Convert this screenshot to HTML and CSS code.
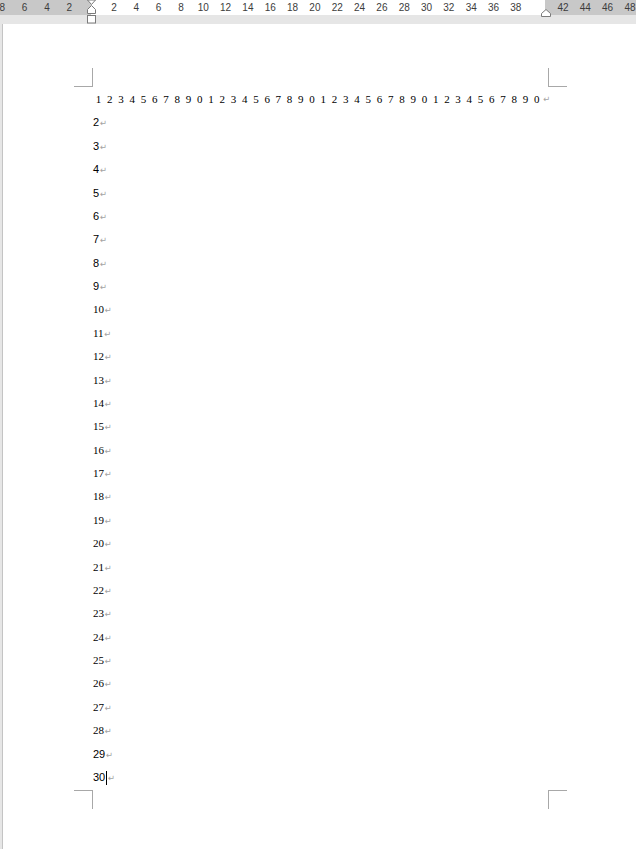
FILE: index.html
```html
<!DOCTYPE html>
<html lang="zh">
<head>
<meta charset="utf-8">
<title>Document</title>
<link rel="stylesheet" href="styles.css">
</head>
<body>
<div class="ruler">
  <div class="r-left"><span>8</span><span>6</span><span>4</span><span>2</span></div>
  <div class="r-main"><span>2</span><span>4</span><span>6</span><span>8</span><span>10</span><span>12</span><span>14</span><span>16</span><span>18</span><span>20</span><span>22</span><span>24</span><span>26</span><span>28</span><span>30</span><span>32</span><span>34</span><span>36</span><span>38</span></div>
  <div class="r-right"><span>42</span><span>44</span><span>46</span><span>48</span></div>
  <svg class="marker-left" width="11" height="24" viewBox="0 0 11 24"><polygon points="1.5,0 9.5,0 5.5,4.5"/><polygon points="5.5,5.5 9.5,9.5 9.5,13.5 1.5,13.5 1.5,9.5"/><rect x="1.5" y="15.5" width="8" height="7.5"/></svg>
  <svg class="marker-right" width="12" height="9" viewBox="0 0 12 9"><polygon points="6,0.5 10.5,4.5 10.5,7.5 1.5,7.5 1.5,4.5"/></svg>
</div>
<div class="band"></div>
<div class="page">
  <div class="textarea">
    <span class="corner tl"></span><span class="corner tr"></span><span class="corner bl"></span><span class="corner br"></span>
    <div class="lines">
      <div class="line grid"><span>1</span><span>2</span><span>3</span><span>4</span><span>5</span><span>6</span><span>7</span><span>8</span><span>9</span><span>0</span><span>1</span><span>2</span><span>3</span><span>4</span><span>5</span><span>6</span><span>7</span><span>8</span><span>9</span><span>0</span><span>1</span><span>2</span><span>3</span><span>4</span><span>5</span><span>6</span><span>7</span><span>8</span><span>9</span><span>0</span><span>1</span><span>2</span><span>3</span><span>4</span><span>5</span><span>6</span><span>7</span><span>8</span><span>9</span><span>0</span><b class="pm">↵</b></div>
      <div class="line sans">2<b class="pm">↵</b></div>
      <div class="line sans">3<b class="pm">↵</b></div>
      <div class="line sans">4<b class="pm">↵</b></div>
      <div class="line sans">5<b class="pm">↵</b></div>
      <div class="line sans">6<b class="pm">↵</b></div>
      <div class="line sans">7<b class="pm">↵</b></div>
      <div class="line sans">8<b class="pm">↵</b></div>
      <div class="line sans">9<b class="pm">↵</b></div>
      <div class="line serif">10<b class="pm">↵</b></div>
      <div class="line serif">11<b class="pm">↵</b></div>
      <div class="line serif">12<b class="pm">↵</b></div>
      <div class="line serif">13<b class="pm">↵</b></div>
      <div class="line serif">14<b class="pm">↵</b></div>
      <div class="line serif">15<b class="pm">↵</b></div>
      <div class="line serif">16<b class="pm">↵</b></div>
      <div class="line serif">17<b class="pm">↵</b></div>
      <div class="line serif">18<b class="pm">↵</b></div>
      <div class="line serif">19<b class="pm">↵</b></div>
      <div class="line serif">20<b class="pm">↵</b></div>
      <div class="line serif">21<b class="pm">↵</b></div>
      <div class="line serif">22<b class="pm">↵</b></div>
      <div class="line serif">23<b class="pm">↵</b></div>
      <div class="line serif">24<b class="pm">↵</b></div>
      <div class="line serif">25<b class="pm">↵</b></div>
      <div class="line serif">26<b class="pm">↵</b></div>
      <div class="line serif">27<b class="pm">↵</b></div>
      <div class="line serif">28<b class="pm">↵</b></div>
      <div class="line sans">29<b class="pm">↵</b></div>
      <div class="line sans">30<i class="caret"></i><b class="pm">↵</b></div>
    </div>
  </div>
</div>
</body>
</html>
```

FILE: styles.css
```css
* { box-sizing: border-box; }
html, body { margin: 0; padding: 0; }
body {
  width: 636px;
  height: 849px;
  overflow: hidden;
  background: #e6e6e6;
  font-family: "Liberation Serif", "Times New Roman", serif;
}
.ruler {
  position: relative;
  height: 15px;
  display: flex;
  font-family: "Liberation Sans", Arial, sans-serif;
  font-size: 10px;
  color: #3c3c3c;
  line-height: 15px;
}
.ruler span {
  flex: 0 0 22.34px;
  width: 22.34px;
  text-align: center;
}
.r-left {
  width: 91px;
  flex: 0 0 91px;
  background: #c8c8c8;
  display: flex;
  justify-content: flex-end;
  padding-right: 10.6px;
  overflow: hidden;
}
.r-main {
  width: 454px;
  flex: 0 0 454px;
  background: #ffffff;
  display: flex;
  padding-left: 11.8px;
}
.r-right {
  flex: 1 1 auto;
  background: #c8c8c8;
  display: flex;
  padding-left: 6.8px;
  overflow: hidden;
}
.marker-left {
  position: absolute;
  left: 86px;
  top: 0;
}
.marker-right {
  position: absolute;
  left: 540px;
  top: 9px;
}
.ruler svg polygon, .ruler svg rect {
  fill: #ffffff;
  stroke: #7a7a7a;
  stroke-width: 1;
}
.band {
  height: 9px;
  background: #e6e6e6;
}
.page {
  margin-left: 2px;
  border-left: 1px solid #c4c4c4;
  background: #ffffff;
  height: 825px;
  padding-left: 89px;
  padding-top: 62px;
}
.textarea {
  position: relative;
  width: 457px;
  height: 704px;
}
.corner {
  position: absolute;
  width: 19px;
  height: 19px;
  border: 0 solid #a8a8a8;
}
.corner.tl { left: -18px; top: -18px; border-right-width: 1px; border-bottom-width: 1px; }
.corner.tr { left: 456px; top: -18px; border-left-width: 1px; border-bottom-width: 1px; }
.corner.bl { left: -18px; top: 704px; border-right-width: 1px; border-top-width: 1px; }
.corner.br { left: 456px; top: 704px; border-left-width: 1px; border-top-width: 1px; }
.lines {
  padding-top: 2px;
}
.line {
  height: 23.39px;
  line-height: 23.39px;
  font-size: 11px;
  color: #000;
  white-space: nowrap;
}
.line.sans { font-family: "Liberation Sans", Arial, sans-serif; padding-left: 1px; }
.line.serif { font-family: "Liberation Serif", "Times New Roman", serif; padding-left: 1px; }
.line.grid {
  display: flex;
  padding-left: 1px;
  font-family: "Liberation Serif", "Times New Roman", serif;
}
.line.grid span {
  flex: 0 0 11.24px;
  width: 11.24px;
  text-align: center;
}
.pm {
  font-weight: normal;
  font-family: "DejaVu Sans", sans-serif;
  font-size: 8.5px;
  color: #a3a3a3;
  margin-left: 0.5px;
}
.caret {
  display: inline-block;
  width: 1px;
  height: 14px;
  background: #000;
  vertical-align: -4px;
  margin-left: 1px;
}
```
